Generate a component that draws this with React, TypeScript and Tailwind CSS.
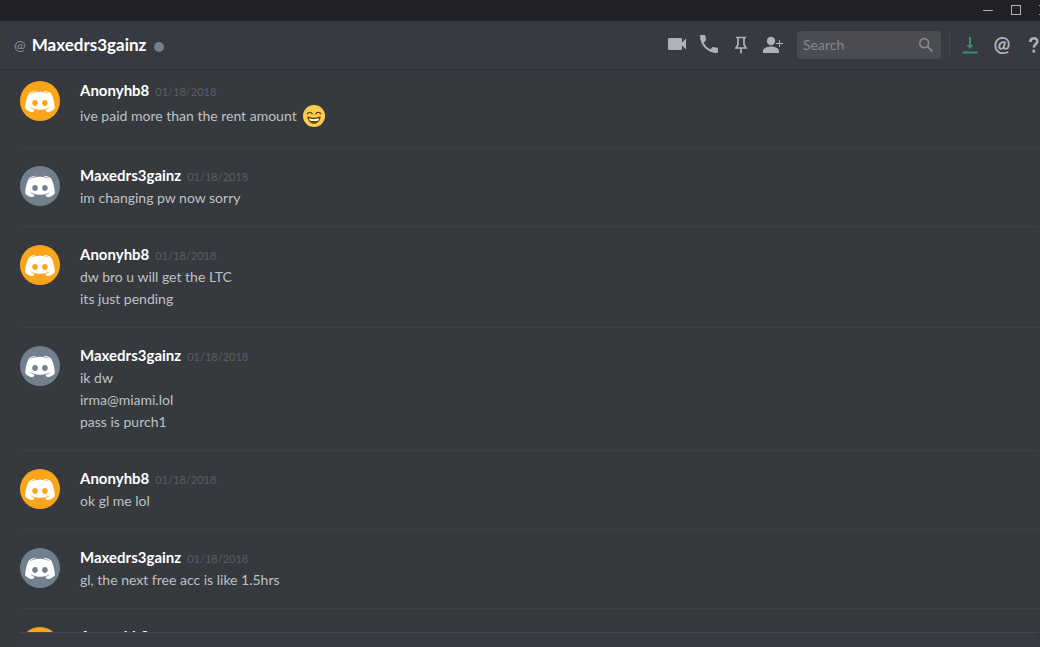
import type { ReactNode } from "react";
import { clsx } from "clsx";

type Author = "Anonyhb8" | "Maxedrs3gainz";

interface MessageGroup {
  author: Author;
  date: string;
  lines: ReactNode[];
}

const groups: MessageGroup[] = [
  {
    author: "Anonyhb8",
    date: "01/18/2018",
    lines: [
      <span className="flex h-7 items-center gap-1.5">
        ive paid more than the rent amount <GrinEmoji />
      </span>,
    ],
  },
  { author: "Maxedrs3gainz", date: "01/18/2018", lines: ["im changing pw now sorry"] },
  { author: "Anonyhb8", date: "01/18/2018", lines: ["dw bro u will get the LTC", "its just pending"] },
  { author: "Maxedrs3gainz", date: "01/18/2018", lines: ["ik dw", "irma@miami.lol", "pass is purch1"] },
  { author: "Anonyhb8", date: "01/18/2018", lines: ["ok gl me lol"] },
  { author: "Maxedrs3gainz", date: "01/18/2018", lines: ["gl, the next free acc is like 1.5hrs"] },
  { author: "Anonyhb8", date: "", lines: [] },
];

function GrinEmoji() {
  return (
    <svg viewBox="0 0 36 36" className="size-[22px] shrink-0" role="img" aria-label="smile">
      <circle cx="18" cy="18" r="18" fill="#FFCC4D" />
      <path
        fill="#664500"
        d="M28.5 19.1c-.4-.3-.9-.4-1.3-.1-.1 0-3.6 1.800-9.200 1.800S8.900 19 8.800 19c-.4-.3-.9-.2-1.300.1-.4.3-.5.8-.4 1.200.1.4 2.200 10.200 10.900 10.200s10.800-9.800 10.900-10.200c.1-.4 0-.9-.4-1.200z"
      />
      <path fill="#FFF" d="M9.500 21.700c1.500.6 4.500 1.500 8.500 1.500s7-.9 8.500-1.500c-.3 1-.8 2.300-1.600 3.600-1.400.5-3.700 1-6.900 1s-5.500-.5-6.900-1c-.8-1.300-1.300-2.600-1.600-3.600z" />
      <path
        fill="none"
        stroke="#664500"
        strokeWidth="2.200"
        strokeLinecap="round"
        d="M7 14.500c1.200-3 6.500-3.500 8 0M21 14.500c1.500-3.500 6.800-3 8 0"
      />
    </svg>
  );
}

function Avatar({ author }: { author: Author }) {
  return (
    <div
      className={clsx(
        "size-10 shrink-0 rounded-full",
        author === "Anonyhb8" ? "bg-[#faa61a]" : "bg-[#747f8d]"
      )}
    >
      <svg viewBox="44 28 158 158" className="size-10" fill="#fff" aria-hidden="true">
        <path
          fillRule="evenodd"
          d="M150.900 150.600s-3.600-4.300-6.600-8.100c13.100-3.700 18.100-11.900 18.100-11.900-4.100 2.700-8 4.600-11.500 5.900-5 2.100-9.800 3.500-14.500 4.300-9.600 1.800-18.400 1.300-25.900-.1-5.700-1.100-10.600-2.700-14.700-4.300-2.300-.9-4.800-2-7.300-3.400-.3-.2-.6-.3-.9-.5-.2-.1-.3-.2-.4-.3-1.800-1-2.800-1.700-2.800-1.700s4.800 8 17.500 11.800c-3 3.800-6.700 8.300-6.700 8.300-22.100-.7-30.500-15.200-30.500-15.200 0-32.200 14.400-58.300 14.400-58.300 14.400-10.800 28.100-10.500 28.100-10.500l1 1.200c-18 5.200-26.300 13.100-26.300 13.100s2.200-1.200 5.900-2.900c10.700-4.700 19.200-6 22.700-6.300.6-.1 1.100-.2 1.700-.2 6.100-.8 13-1 20.200-.2 9.500 1.100 19.700 3.900 30.100 9.600 0 0-7.900-7.500-24.900-12.700l1.400-1.600s13.700-.3 28.100 10.500c0 0 14.400 26.100 14.400 58.300 0 0-8.500 14.500-30.600 15.200zM103.400 103.400c-6.200 0-11.200 5-11.200 11.600s5 11.600 11.200 11.600 11.200-5 11.200-11.600-5-11.600-11.200-11.600zM142.400 103.400c-6.200 0-11.200 5-11.200 11.600s5 11.600 11.200 11.600 11.200-5 11.200-11.600-5-11.600-11.200-11.600z"
        />
      </svg>
    </div>
  );
}

function IconButton({ label, children }: { label: string; children: ReactNode }) {
  return (
    <button
      type="button"
      aria-label={label}
      className="flex size-6 shrink-0 items-center justify-center text-[#b0b1b5] hover:text-white"
    >
      {children}
    </button>
  );
}

function TitleBar() {
  return (
    <div className="-mr-[18px] flex h-[21px] shrink-0 justify-end bg-[#202225] pb-px text-[#b0b1b4]">
      <button type="button" aria-label="Minimize" className="flex w-7 items-center justify-center">
        <span className="h-px w-2.5 bg-current" />
      </button>
      <button type="button" aria-label="Maximize" className="flex w-7 items-center justify-center">
        <span className="size-2.5 border border-current" />
      </button>
      <button type="button" aria-label="Close" className="flex w-7 items-center justify-center">
        <svg viewBox="0 0 10 10" className="size-2.5" stroke="currentColor" aria-hidden="true">
          <path d="M0 0l10 10M10 0L0 10" />
        </svg>
      </button>
    </div>
  );
}

function Header() {
  return (
    <header className="-mr-1.5 flex h-[49px] shrink-0 items-center border-b border-[#2b2d32] bg-[#373a41] pl-3.5">
      <span className="text-sm text-[#8a8c91]">@</span>
      <h1 className="ml-1.5 text-[17px] font-bold text-white">Maxedrs3gainz</h1>
      <span className="mt-1 ml-2 size-2.5 rounded-full bg-[#747f8d]" />
      <div className="ml-auto flex items-center gap-2">
        <IconButton label="Start video call">
          <svg viewBox="0 0 24 24" className="size-6" fill="currentColor" aria-hidden="true">
            <path d="M17 9.500V6a1 1 0 0 0-1-1H4a1 1 0 0 0-1 1v10a1 1 0 0 0 1 1h12a1 1 0 0 0 1-1v-3.500l4 4v-11l-4 4z" />
          </svg>
        </IconButton>
        <IconButton label="Start voice call">
          <svg viewBox="0 0 24 24" className="size-6" fill="currentColor" aria-hidden="true">
            <path d="M6.620 9.790a15.150 15.150 0 0 0 6.590 6.590l2.200-2.200c.28-.28.67-.36 1.020-.25 1.120.37 2.320.57 3.570.57a1 1 0 0 1 1 1V19a1 1 0 0 1-1 1A17 17 0 0 1 3 3a1 1 0 0 1 1-1h3.500a1 1 0 0 1 1 1c0 1.250.2 2.450.57 3.570.11.35.03.74-.25 1.020l-2.200 2.200z" />
          </svg>
        </IconButton>
        <IconButton label="Pinned messages">
          <svg viewBox="0 0 24 24" className="size-6" fill="none" stroke="currentColor" strokeWidth="1.700" aria-hidden="true">
            <path d="M7 4.500h10M9 4.500v7l-2 3.500h10l-2-3.500v-7M12 15v5.500" />
          </svg>
        </IconButton>
        <IconButton label="Add friends to DM">
          <svg viewBox="0 0 24 24" className="size-6" fill="currentColor" aria-hidden="true">
            <circle cx="10" cy="8" r="4.200" />
            <path d="M2 20v-2c0-3 4.500-4.500 8-4.500s8 1.500 8 4.500v2zM18 7h1v3h3v1h-3v3h-1v-3h-3v-1h3z" />
          </svg>
        </IconButton>
      </div>
      <label className="ml-3 flex h-7 w-36 shrink-0 items-center rounded-sm bg-[#4b4c51] px-1.5">
        <input
          type="text"
          aria-label="Search"
          placeholder="Search"
          className="min-w-0 flex-1 bg-transparent text-sm text-white outline-none placeholder:text-[#85878c]"
        />
        <svg viewBox="0 0 18 18" className="size-[18px]" fill="none" stroke="#85878c" aria-hidden="true">
          <circle cx="7.200" cy="7.200" r="4.500" strokeWidth="1.700" />
          <path d="M10.600 10.600l5 5" strokeWidth="2" />
        </svg>
      </label>
      <span className="ml-2 h-[22px] w-px bg-[#494b51]" />
      <div className="ml-2 flex items-center gap-2">
        <IconButton label="Updates">
          <svg viewBox="0 0 24 24" className="size-6 text-[#3d8f68]" fill="currentColor" aria-hidden="true">
            <path d="M11 4h2v8h2.500L12 16l-3.500-4H11zM4.500 18.500h15v2h-15z" />
          </svg>
        </IconButton>
        <IconButton label="Mentions">
          <span className="pb-1 text-xl leading-5 font-bold">@</span>
        </IconButton>
        <IconButton label="Help">
          <svg viewBox="0 0 24 24" className="size-6" fill="none" stroke="currentColor" strokeWidth="2.600" aria-hidden="true">
            <path d="M8.300 9c0-5 7-4.800 7-.8 0 3-3.500 3-3.500 6.300M11.800 16.800v3" />
          </svg>
        </IconButton>
      </div>
    </header>
  );
}

function Message({ group }: { group: MessageGroup }) {
  return (
    <article className="flex gap-5 border-b border-[#3e4146] pt-[18px] pb-[17px]">
      <Avatar author={group.author} />
      <div className="min-w-0">
        <h2 className="flex h-[21px] items-baseline gap-1.5 leading-[18px]">
          <span className="text-[15px] font-bold text-white">{group.author}</span>
          <time className="text-[11px] text-[#5b5e63]">{group.date}</time>
        </h2>
        {group.lines.map((line, i) => (
          <div key={i} className="text-sm leading-[22px] text-[#bfc1c3]">
            {line}
          </div>
        ))}
      </div>
    </article>
  );
}

export default function App() {
  return (
    <div className="flex h-screen flex-col overflow-hidden bg-[#36393e] font-['Lato',sans-serif]">
      <TitleBar />
      <Header />
      <main className="-mt-[7px] mr-0.5 min-h-0 flex-1 overflow-hidden pl-5">
        {groups.map((group, i) => (
          <Message key={i} group={group} />
        ))}
      </main>
      <footer className="mr-0.5 ml-5 h-[15px] shrink-0 border-t border-[#44474d] bg-[#373a41]" />
    </div>
  );
}
